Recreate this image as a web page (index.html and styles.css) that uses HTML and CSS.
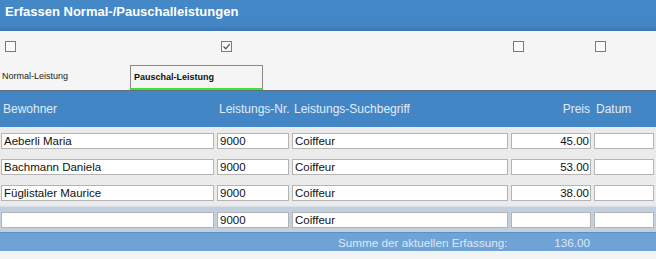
FILE: index.html
```html
<!DOCTYPE html>
<html lang="de">
<head>
    <meta charset="UTF-8">
    <title>Erfassen Normal-/Pauschalleistungen</title>
    <link rel="stylesheet" href="styles.css">
</head>
<body>
<div id="page">
    <div class="title">Erfassen Normal-/Pauschalleistungen</div>

    <div class="options">
        <div class="grid checks">
            <span class="check"></span>
            <span class="check checked">
                <svg width="9" height="9" viewBox="0 0 9 9"><path d="M1.5 4.5 L3.8 6.8 L7.8 1.8" fill="none" stroke="#555" stroke-width="1.3"/></svg>
            </span>
            <span></span>
            <span class="check"></span>
            <span class="check"></span>
        </div>
        <ul class="tabs">
            <li>Normal-Leistung</li>
            <li class="active">Pauschal-Leistung</li>
        </ul>
    </div>

    <div class="grid head">
        <span>Bewohner</span>
        <span>Leistungs-Nr.</span>
        <span>Leistungs-Suchbegriff</span>
        <span class="num">Preis</span>
        <span>Datum</span>
    </div>

    <div class="rows">
        <div class="grid row">
            <span class="field">Aeberli Maria</span>
            <span class="field">9000</span>
            <span class="field">Coiffeur</span>
            <span class="field num">45.00</span>
            <span class="field"></span>
        </div>
        <div class="grid row">
            <span class="field">Bachmann Daniela</span>
            <span class="field">9000</span>
            <span class="field">Coiffeur</span>
            <span class="field num">53.00</span>
            <span class="field"></span>
        </div>
        <div class="grid row">
            <span class="field">Füglistaler Maurice</span>
            <span class="field">9000</span>
            <span class="field">Coiffeur</span>
            <span class="field num">38.00</span>
            <span class="field"></span>
        </div>
        <div class="grid row new">
            <span class="field"></span>
            <span class="field">9000</span>
            <span class="field">Coiffeur</span>
            <span class="field num"></span>
            <span class="field"></span>
        </div>
    </div>

    <div class="grid total">
        <span></span>
        <span></span>
        <span class="label">Summe der aktuellen Erfassung:</span>
        <span class="num">136.00</span>
        <span></span>
    </div>
</div>
</body>
</html>
```

FILE: styles.css
```css
*{
    margin: 0;
    padding: 0;
    box-sizing: border-box;
}
ul{
    list-style: none;
}
body{
    background: #f3f3f3;
    font-family: "Liberation Sans", Arial, sans-serif;
    font-size: 12px;
    color: #111;
}
#page{
    width: 656px;
    height: 259px;
    overflow: hidden;
}
.title{
    height: 31px;
    padding: 4px 5px 0;
    background: linear-gradient(#4488c8 0, #4286c5 80%, #3a78b2 100%);
    color: #fff;
    font-size: 13px;
    font-weight: bold;
}
.grid{
    display: grid;
    grid-template-columns: 213px 72px 216px 80px 60px;
    column-gap: 3px;
    padding-left: 1px;
}
.options{
    background: #f5f5f5;
    border-top: 1px solid #fbfbfb;
    border-bottom: 1px solid #62707c;
}
.checks{
    height: 33px;
    padding-top: 9px;
}
.check{
    display: flex;
    align-items: center;
    justify-content: center;
    width: 11px;
    height: 11px;
    margin-left: 4px;
    border: 1px solid #7a7a7a;
    background: #fafafa;
}
.checks .check:nth-child(4){
    margin-left: 2px;
}
.checks .check:nth-child(5){
    margin-left: 1px;
}
.tabs{
    display: flex;
    height: 25px;
}
.tabs li{
    width: 130px;
    padding: 6px 0 0 2px;
    font-size: 9px;
    color: #222;
}
.tabs .active{
    width: 133px;
    padding-left: 3px;
    border: 1px solid #8a8a8a;
    border-bottom: 2px solid #3ee23e;
    font-weight: bold;
    color: #111;
}
.head{
    height: 36px;
    align-items: center;
    background: #4286c6;
    color: #e1ecf8;
    white-space: nowrap;
}
.head span{
    padding-left: 2px;
}
.head .num{
    padding-right: 1px;
}
.num{
    text-align: right;
}
.rows{
    background: #ebebeb;
    padding-top: 1px;
}
.row{
    height: 26px;
    align-items: center;
}
.row.new{
    background: #c2cfdd;
    border-top: 1px solid #d6dee7;
}
.field{
    height: 16px;
    padding: 1px 2px 0;
    background: #fff;
    border: 1px solid #b4b4b4;
    font-size: 11.5px;
    line-height: 13px;
    white-space: nowrap;
    overflow: hidden;
}
.field.num{
    padding-right: 1px;
}
.total{
    height: 19px;
    align-items: center;
    background: #6fa2d5;
    border-top: 1px solid #5c8fc4;
    color: #dce8f5;
    font-size: 11.7px;
}
.total .label{
    padding-left: 46px;
    white-space: nowrap;
}
.total .num{
    padding-right: 1px;
}
```
